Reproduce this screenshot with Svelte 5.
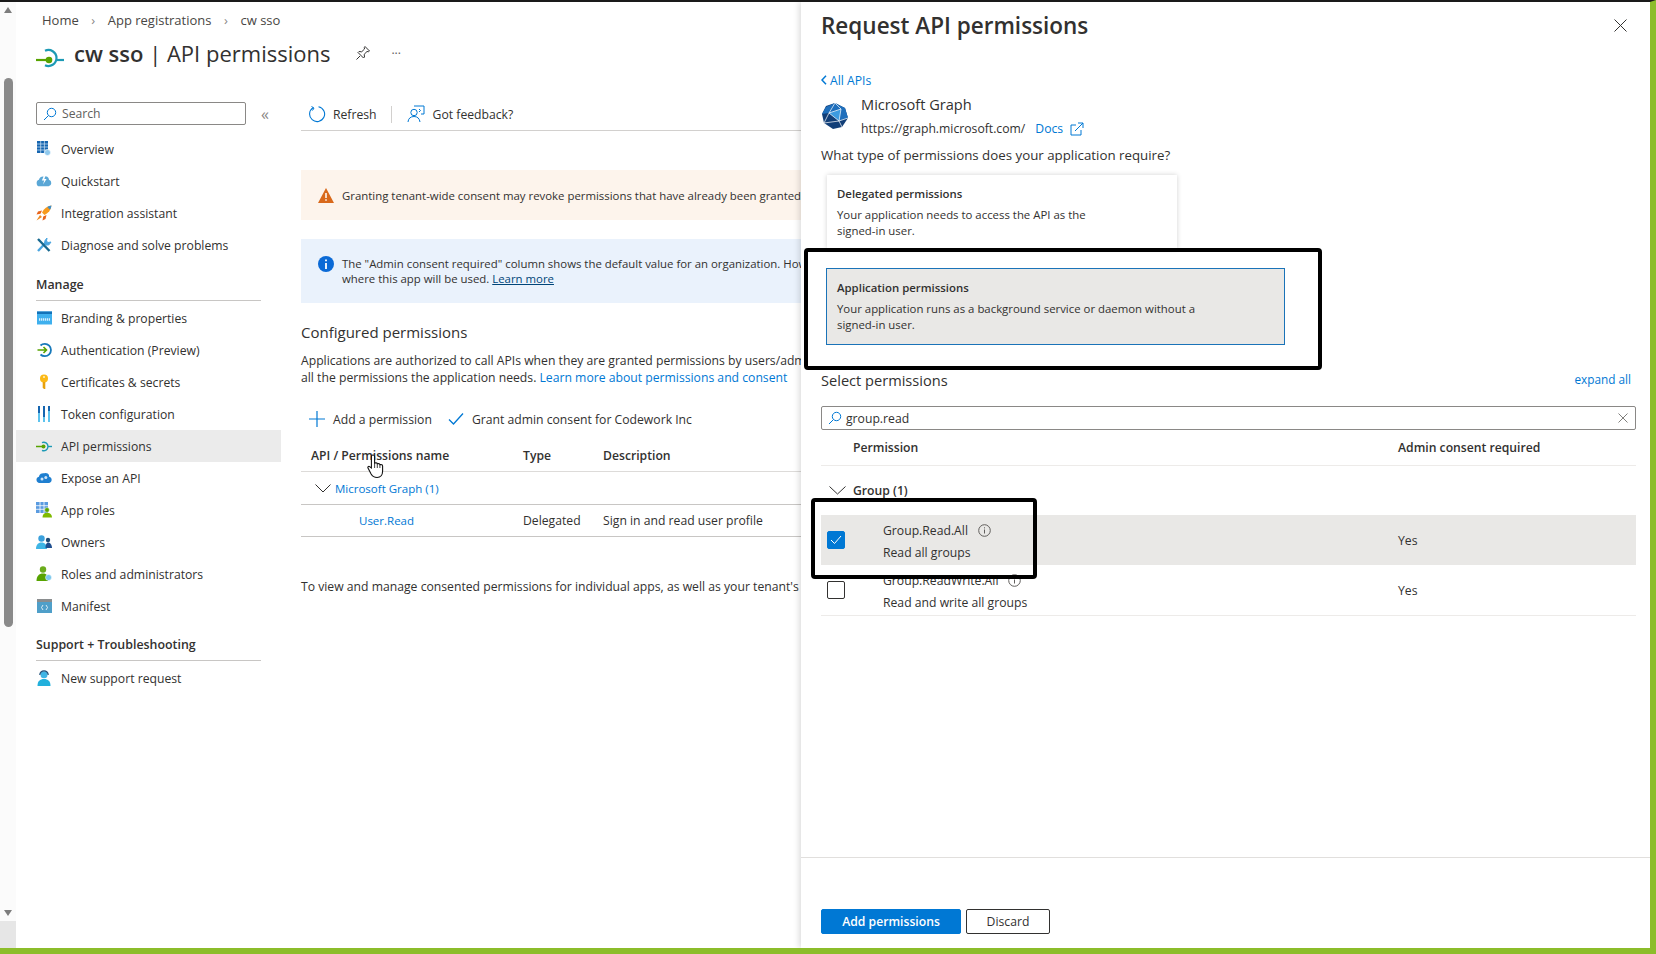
<script>
	const topItems = [
		{ icon: 'overview', label: 'Overview' },
		{ icon: 'quick', label: 'Quickstart' },
		{ icon: 'rocket', label: 'Integration assistant' },
		{ icon: 'tools', label: 'Diagnose and solve problems' }
	];
	const manageItems = [
		{ icon: 'brand', label: 'Branding & properties' },
		{ icon: 'auth', label: 'Authentication (Preview)' },
		{ icon: 'key', label: 'Certificates & secrets' },
		{ icon: 'token', label: 'Token configuration' },
		{ icon: 'api', label: 'API permissions', active: true },
		{ icon: 'expose', label: 'Expose an API' },
		{ icon: 'roles', label: 'App roles' },
		{ icon: 'owners', label: 'Owners' },
		{ icon: 'admins', label: 'Roles and administrators' },
		{ icon: 'manifest', label: 'Manifest' }
	];
	const scopes = [
		{ name: 'Group.Read.All', desc: 'Read all groups', checked: true },
		{ name: 'Group.ReadWrite.All', desc: 'Read and write all groups', checked: false }
	];
</script>

{#snippet navIcon(name)}
	<svg class="nav-icon" width="16" height="16" viewBox="0 0 16 16">
		{#if name === 'overview'}
			<path d="M1 0h11v12H1z" fill="#1565b0" />
			<path d="M4.700 0v12M8.400 0v12M1 3h11M1 6h11M1 9h11" stroke="#d5e8f7" stroke-width=".7" />
			<circle cx="11.500" cy="11.500" r="3" fill="#8fc8ec" stroke="#fff" stroke-width=".6" />
		{:else if name === 'quick'}
			<path d="M3.500 13.500a3 3 0 0 1-.6-5.900A4 4 0 0 1 8 4.700a3.400 3.400 0 0 1 5 2.900 3 3 0 0 1-.4 5.900z" transform="translate(0 -1.500) scale(1 1.100)" fill="#5aa7d6" />
			<path d="M8.500 1.500 5.800 7.500h2.400L7 11.500l3.600-5.500H8.300L10 1.500z" fill="#fff" />
		{:else if name === 'rocket'}
			<path d="M15.500.500c-4.500.5-7.500 3-9.500 7l2.500 2.500c4-2 6.500-5 7-9.500z" fill="#f79a1d" />
			<path d="M15.500.500c-1.700.2-3 .7-4.200 1.500l2.700 2.700c.8-1.200 1.300-2.500 1.500-4.200z" fill="#3d8fcc" />
			<path d="M6 5.500 2 6.500 .5 9.500l4-.7zM10.500 10l-1 4-3 1.500.7-4z" fill="#e8641b" />
			<path d="M4 10 .5 15.500 6 12z" fill="#ef8a1f" />
		{:else if name === 'tools'}
			<path d="M2 14 10 5.500" stroke="#4aa5e0" stroke-width="2.400" />
			<path d="M9 3.500 11 1l-.5 3 1.500 1.500 3-.5-2 2.800-3 .3-1.500-1.500z" fill="#4aa5e0" stroke="#4aa5e0" />
			<path d="M2 2l11.500 12" stroke="#17688f" stroke-width="2.400" />
		{:else if name === 'brand'}
			<path d="M1 1.500h15v13H1z" fill="#3fb0ee" />
			<path d="M1 1.500h15v2.500H1z" fill="#1372b8" />
			<path d="M3 9.500h11" stroke="#d8f0fd" stroke-width="2.400" stroke-dasharray="1.300 .7" />
		{:else if name === 'auth'}
			<path d="M4.500 3.500A6.200 6.200 0 1 1 4.500 12.500" fill="none" stroke="#1779ba" stroke-width="1.800" />
			<path d="M1.500 8h9M7.500 5l3 3-3 3" fill="none" stroke="#57a300" stroke-width="1.600" />
		{:else if name === 'key'}
			<circle cx="8" cy="4.500" r="4" fill="#fcb916" />
			<path d="M6.700 8h2.600v7H8l-1.300-1.300z" fill="#e8a10c" />
			<circle cx="8" cy="3" r="1" fill="#fff3c4" />
		{:else if name === 'token'}
			<path d="M3 0v16M8 0v16M13 0v16" stroke="#5cc3ee" stroke-width="2" />
			<path d="M3 0v7M8 0v11M13 0v5" stroke="#1565b0" stroke-width="2" />
		{:else if name === 'api'}
			<path d="M0 8.500h8" stroke="#57a300" stroke-width="1.500" />
			<circle cx="7.500" cy="8.500" r="2" fill="#57a300" />
			<path d="M6 4.700a4.200 4.200 0 1 1 0 7.600" fill="none" stroke="#1c9ab5" stroke-width="1.400" />
			<path d="M12 8.500h4" stroke="#1c9ab5" stroke-width="1.400" />
		{:else if name === 'expose'}
			<path d="M3.500 13a3.200 3.200 0 0 1-.6-6.300A4.300 4.300 0 0 1 8.200 3.300a3.500 3.500 0 0 1 5 3.400 3.200 3.200 0 0 1-.5 6.300z" fill="#1f7fd0" />
			<circle cx="6" cy="9" r="1.500" fill="#cfe4f7" />
			<circle cx="9.800" cy="7.500" r="1.500" fill="#cfe4f7" />
		{:else if name === 'roles'}
			<path d="M0 0h12v11H0z" fill="#5a9be0" />
			<path d="M4 0v11M8 0v11M0 3.700h12M0 7.300h12" stroke="#fff" stroke-width=".8" />
			<circle cx="11" cy="8" r="2.400" fill="#57a300" stroke="#fff" stroke-width=".5" />
			<path d="M6.500 15.500c0-3 1.500-4.800 4.500-4.800s5 1.800 5 4.800z" fill="#7fba00" />
		{:else if name === 'owners'}
			<circle cx="5.500" cy="4.500" r="3.200" fill="#3aa0dc" />
			<path d="M0 15c0-4 2-6.500 5.500-6.500S11 11 11 15z" fill="#3fb5e5" />
			<circle cx="12" cy="6" r="2.200" fill="#1f4e79" />
			<path d="M9.500 14c0-3 .8-5.500 2.800-5.500S16 11 16 14z" fill="#1f4e8f" />
		{:else if name === 'admins'}
			<circle cx="7" cy="3.500" r="3.200" fill="#6bac1c" />
			<path d="M.5 15c0-5 2.500-7.500 6.500-7.500s5 2 5 7.500z" fill="#57a300" />
			<circle cx="12.500" cy="11.500" r="3" fill="#7cc8ec" stroke="#fff" stroke-width=".5" />
		{:else if name === 'manifest'}
			<path d="M1 1h15v14H1z" fill="#4f9fc9" />
			<path d="M1 1h15v3H1z" fill="#8a8d8f" />
			<path d="M7 7 5.500 9.500 7 12M10 7l1.500 2.500L10 12" fill="none" stroke="#fff" stroke-width=".8" />
		{:else}
			<circle cx="8" cy="4.800" r="3.500" fill="#3fb5e5" />
			<path d="M3.800 5a4.200 4.200 0 0 1 8.400 0" fill="none" stroke="#1f4e79" stroke-width="1.200" />
			<path d="M1.500 16c0-5 2.500-7 6.500-7s6.500 2 6.500 7z" fill="#22b0dc" />
		{/if}
	</svg>
{/snippet}

{#snippet infoDot()}
	<svg class="info-dot" width="13" height="13" viewBox="0 0 13 13">
		<circle cx="6.500" cy="6.500" r="5.800" fill="none" stroke="#605e5c" />
		<path d="M6.500 5.500v4M6.500 3.300v1.100" stroke="#605e5c" />
	</svg>
{/snippet}

<div class="screen">
	<div class="scrollbar">
		<span class="arrow up"></span>
		<div class="thumb"></div>
		<span class="arrow down"></span>
		<div class="scroll-end"></div>
	</div>

	<div class="blade">
		<nav class="crumbs">
			<span>Home</span><i>›</i><span>App registrations</span><i>›</i><span>cw sso</span>
		</nav>
		<header class="title">
			<svg width="28" height="20" viewBox="0 0 28 20">
				<path d="M0 12h13" stroke="#57a300" stroke-width="2.200" />
				<circle cx="13" cy="12" r="3.300" fill="#57a300" />
				<path d="M9 4.800a8 8 0 1 1 0 14.400" fill="none" stroke="#1c9ab5" stroke-width="2.200" transform="translate(0 -2)" />
				<path d="M21 12h7" stroke="#1c9ab5" stroke-width="2.200" />
			</svg>
			<h1><b>cw sso</b> | API permissions</h1>
			<svg class="pin" width="16" height="16" viewBox="0 0 16 16">
				<path d="M10 1.500 14.500 6l-1 .7-1.500-.2-2.800 2.800.3 2.700-1 1-5.500-5.500 1-1 2.700.3L9.500 4 9.300 2.500zM5 11l-3.500 3.500" fill="none" stroke="#323130" />
			</svg>
			<span class="more">···</span>
		</header>

		<div class="columns">
			<aside class="side">
				<div class="side-search">
					<div class="search-box">
						<svg width="14" height="14" viewBox="0 0 14 14">
							<circle cx="8.500" cy="5.500" r="4.200" fill="none" stroke="#0078d4" />
							<path d="M5.500 8.500 1 13" stroke="#0078d4" />
						</svg>
						<span>Search</span>
					</div>
					<span class="collapse">«</span>
				</div>
				<ul>
					{#each topItems as item}
						<li>{@render navIcon(item.icon)}<span>{item.label}</span></li>
					{/each}
				</ul>
				<h3>Manage</h3>
				<ul>
					{#each manageItems as item}
						<li class:active={item.active}>{@render navIcon(item.icon)}<span>{item.label}</span></li>
					{/each}
				</ul>
				<h3 class="support">Support + Troubleshooting</h3>
				<ul>
					<li>{@render navIcon('support')}<span>New support request</span></li>
				</ul>
			</aside>

			<main class="content">
				<div class="toolbar">
					<span class="tool">
						<svg width="18" height="18" viewBox="0 0 18 18">
							<path d="M5 2.800A7.500 7.500 0 1 0 10.500 1.700" fill="none" stroke="#0078d4" stroke-width="1.100" />
							<path d="M3.500 1.500 6 3 4.500 5.500" fill="none" stroke="#0078d4" />
						</svg>
						Refresh
					</span>
					<span class="sep"></span>
					<span class="tool feedback">
						<svg width="18" height="18" viewBox="0 0 18 18">
							<circle cx="7" cy="7.500" r="3.200" fill="none" stroke="#0078d4" />
							<path d="M1 17c.3-3.500 2.500-5.500 6-5.500s5.500 2 6 5.500M7 1h10v8h-3M12 4l1.500 1.500L12 7" fill="none" stroke="#0078d4" />
						</svg>
						Got feedback?
					</span>
				</div>

				<div class="banner warn">
					<svg width="16" height="15" viewBox="0 0 16 15">
						<path d="M8 0 16 15H0z" fill="#d9691b" />
						<path d="M8 5v5M8 11.200v1.600" stroke="#fff" stroke-width="1.500" />
					</svg>
					<p>Granting tenant-wide consent may revoke permissions that have already been granted for this tenant.</p>
				</div>
				<div class="banner info">
					<svg width="16" height="16" viewBox="0 0 16 16">
						<circle cx="8" cy="8" r="8" fill="#0b6ad6" />
						<path d="M8 7v6M8 3.500v1.800" stroke="#fff" stroke-width="1.800" />
					</svg>
					<p>The "Admin consent required" column shows the default value for an organization. However, user consent can be customized per permission,<br />where this app will be used. <a href="#top" class="under">Learn more</a></p>
				</div>

				<h2>Configured permissions</h2>
				<p class="lead">
					Applications are authorized to call APIs when they are granted permissions by users/admins as part of the consent process. The list of configured permissions should include<br />
					all the permissions the application needs. <a href="#top">Learn more about permissions and consent</a>
				</p>

				<div class="actions">
					<span class="tool">
						<svg width="16" height="16" viewBox="0 0 16 16"><path d="M8 0v16M0 8h16" stroke="#0078d4" stroke-width="1.200" /></svg>
						Add a permission
					</span>
					<span class="tool grant">
						<svg width="16" height="14" viewBox="0 0 16 14"><path d="M1 7.500 5.500 12 15 1.500" fill="none" stroke="#0078d4" stroke-width="1.300" /></svg>
						Grant admin consent for Codework Inc
					</span>
				</div>

				<div class="grid-row head">
					<span>API / Permissions name</span><span>Type</span><span>Description</span><span>Admin consent req...</span>
				</div>
				<div class="api-group">
					<svg width="16" height="9" viewBox="0 0 16 9"><path d="M.5.500 8 8 15.500.500" fill="none" stroke="#323130" /></svg>
					<a href="#top">Microsoft Graph (1)</a>
				</div>
				<div class="grid-row perm">
					<a href="#top">User.Read</a><span>Delegated</span><span>Sign in and read user profile</span><span>No</span>
				</div>
				<p class="note">To view and manage consented permissions for individual apps, as well as your tenant's consent settings, try Enterprise applications.</p>
			</main>
		</div>
	</div>

	<section class="panel">
		<div class="panel-head">
			<h1>Request API permissions</h1>
			<svg width="13" height="13" viewBox="0 0 13 13"><path d="M.5.500l12 12M12.500.500l-12 12" stroke="#323130" /></svg>
		</div>
		<a class="back" href="#top">
			<svg width="6" height="10" viewBox="0 0 6 10"><path d="M5 .8 1 5l4 4.200" fill="none" stroke="#0078d4" stroke-width="1.500" /></svg>
			All APIs
		</a>
		<div class="graph">
			<svg width="28" height="28" viewBox="0 0 28 28">
				<path d="M14 1 24 6l3 10-6 9-9 2-9-6-2-9 4-8z" fill="#123f78" />
				<path d="M14 1 24 6l3 10-9 3L8 11 1 12l4-7z" fill="#1f6fbc" />
				<path d="M8 11 20 7l-2 12z" fill="#3d9be0" />
				<path d="M14 1 8 11 20 7 14 1M8 11l10 8 2-12M8 11l-5 10 15-2 3 6M18 19l9-3" fill="none" stroke="#fff" stroke-width=".7" />
			</svg>
			<div>
				<div class="graph-name">Microsoft Graph</div>
				<div class="graph-url">
					https://graph.microsoft.com/
					<a href="#top">Docs</a>
					<svg width="14" height="14" viewBox="0 0 14 14"><path d="M6 3H1v10h10V8M5 9l8-8M8 1h5v5" fill="none" stroke="#0078d4" /></svg>
				</div>
			</div>
		</div>
		<p class="question">What type of permissions does your application require?</p>

		<div class="type-card">
			<h4>Delegated permissions</h4>
			<p>Your application needs to access the API as the<br />signed-in user.</p>
		</div>
		<div class="type-card selected">
			<h4>Application permissions</h4>
			<p>Your application runs as a background service or daemon without a<br />signed-in user.</p>
		</div>

		<div class="select-head">
			<h2>Select permissions</h2>
			<a href="#top">expand all</a>
		</div>
		<div class="filter">
			<svg width="14" height="14" viewBox="0 0 14 14">
				<circle cx="8.500" cy="5.500" r="4.200" fill="none" stroke="#0078d4" />
				<path d="M5.500 8.500 1 13" stroke="#0078d4" />
			</svg>
			<span>group.read</span>
			<svg class="clear" width="10" height="10" viewBox="0 0 10 10"><path d="M.5.500l9 9M9.500.500l-9 9" stroke="#605e5c" stroke-width=".8" /></svg>
		</div>
		<div class="scope-head"><span>Permission</span><span>Admin consent required</span></div>
		<div class="scope-group">
			<svg width="17" height="9" viewBox="0 0 17 9"><path d="M.5.500 8.500 8 16.500.500" fill="none" stroke="#323130" /></svg>
			<span>Group (1)</span>
		</div>
		{#each scopes as scope}
			<div class="scope" class:checked={scope.checked}>
				<span class="box">
					{#if scope.checked}
						<svg width="12" height="10" viewBox="0 0 12 10"><path d="M1 5l3.500 3.500L11 1" fill="none" stroke="#fff" /></svg>
					{/if}
				</span>
				<div class="scope-text">
					<div class="scope-name">{scope.name}{@render infoDot()}</div>
					<div class="scope-desc">{scope.desc}</div>
				</div>
				<span class="yes">Yes</span>
			</div>
		{/each}

		<div class="footer">
			<button class="primary">Add permissions</button>
			<button>Discard</button>
		</div>
	</section>

	<!-- tutorial markup drawn over the capture -->
	<div class="callout one"></div>
	<div class="callout two"></div>
	<svg class="hand" width="20" height="26" viewBox="0 0 20 26">
		<path d="M6 2c1 0 1.600.7 1.600 1.700V10l1.400-.3c.8 0 1.200.4 1.300 1l1.300-.2c.8 0 1.200.4 1.300 1.100l1.200-.1c1 0 1.500.6 1.500 1.500V18c0 3.500-2 6.500-5.500 6.500-3 0-4.500-1-6-3.500L1 15c-.5-1 .6-2 1.600-1.400L4.400 15V3.700C4.400 2.700 5 2 6 2z" fill="#fff" stroke="#111" stroke-width="1.100" />
		<path d="M7.600 10v5M10.300 10.500V15M12.900 11.500V15" stroke="#111" stroke-width=".8" />
	</svg>
</div>

<style>
	:global(body) {
		margin: 0;
	}

	.screen {
		position: relative;
		width: 1656px;
		height: 954px;
		box-sizing: border-box;
		display: flex;
		overflow: hidden;
		background: #fff;
		border-top: 2px solid #1a1a1a;
		border-right: 6px solid #8cbd2a;
		border-bottom: 6px solid #8cbd2a;
		font-family: 'Open Sans', 'Noto Sans', sans-serif;
		font-size: 12.2px;
		color: #323130;
	}

	a {
		color: #0078d4;
		text-decoration: none;
	}

	h1,
	h2,
	h3,
	h4,
	p,
	ul {
		margin: 0;
		padding: 0;
		font-weight: 400;
	}

	ul {
		list-style: none;
	}

	/* page scrollbar */
	.scrollbar {
		flex: none;
		width: 16px;
		display: flex;
		flex-direction: column;
		align-items: center;
		background: #fbfbfb;
	}

	.arrow {
		width: 0;
		height: 0;
		border-left: 4px solid transparent;
		border-right: 4px solid transparent;
	}

	.arrow.up {
		margin-top: 5px;
		border-bottom: 6px solid #7d7d7d;
	}

	.arrow.down {
		margin-top: auto;
		margin-bottom: 5px;
		border-top: 6px solid #7d7d7d;
	}

	.thumb {
		width: 9px;
		height: 549px;
		margin-top: 65px;
		border-radius: 5px;
		background: #8a8a8a;
	}

	.scroll-end {
		align-self: stretch;
		height: 27px;
		background: #e6e6e6;
	}

	/* blade behind the panel */
	.blade {
		flex: none;
		width: 785px;
		overflow: hidden;
	}

	.crumbs {
		display: flex;
		align-items: center;
		height: 20px;
		margin: 8px 0 0 26px;
		font-size: 13px;
		color: #484644;
	}

	.crumbs i {
		width: 29px;
		text-align: center;
		font-style: normal;
		color: #8a8886;
	}

	.title {
		display: flex;
		align-items: center;
		height: 36px;
		margin: 5px 0 0 20px;
	}

	.title svg:first-child {
		margin-top: 10px;
	}

	.title h1 {
		margin-left: 10px;
		font-size: 22px;
		white-space: nowrap;
	}

	.title b {
		font-weight: 600;
	}

	.pin {
		margin-left: 25px;
	}

	.more {
		margin-left: 20px;
		color: #605e5c;
	}

	.columns {
		display: flex;
		margin-top: 31px;
	}

	.side {
		flex: none;
		width: 265px;
	}

	.side-search {
		display: flex;
		align-items: center;
		height: 23px;
		padding-left: 20px;
	}

	.search-box {
		flex: none;
		display: flex;
		align-items: center;
		gap: 5px;
		box-sizing: border-box;
		width: 210px;
		height: 23px;
		padding-left: 6px;
		border: 1px solid #8a8886;
		border-radius: 2px;
		color: #605e5c;
	}

	.collapse {
		margin-left: 15px;
		font-size: 16px;
		color: #8a8886;
	}

	.side ul {
		margin-top: 8px;
	}

	.side h3 + ul {
		margin-top: 1px;
	}

	.side li {
		display: flex;
		align-items: center;
		gap: 9px;
		height: 32px;
		padding-left: 20px;
		white-space: nowrap;
	}

	.side li.active {
		background: #ebebeb;
	}

	.nav-icon {
		flex: none;
	}

	.side h3 {
		height: 20px;
		margin: 15px 20px 0;
		padding-bottom: 4px;
		border-bottom: 1px solid #c8c6c4;
		font-size: 12.4px;
		font-weight: 600;
	}

	.side h3.support {
		margin-top: 14px;
	}

	.content {
		flex: 1;
		min-width: 0;
		margin-left: 20px;
		white-space: nowrap;
	}

	.toolbar {
		display: flex;
		align-items: center;
		height: 32px;
		margin-top: -4px;
		padding-left: 7px;
		border-bottom: 1px solid #d2d0ce;
	}

	.tool {
		display: inline-flex;
		align-items: center;
		gap: 7px;
	}

	.tool.feedback {
		gap: 8px;
	}

	.sep {
		width: 1px;
		height: 17px;
		margin: 0 15px 0 14px;
		background: #d2d0ce;
	}

	.banner {
		display: flex;
		gap: 8px;
		padding-left: 17px;
		font-size: 11.400px;
		line-height: 15px;
	}

	.banner svg {
		flex: none;
	}

	.banner.warn {
		align-items: center;
		height: 50px;
		margin-top: 39px;
		background: #fdf4ec;
	}

	.banner.info {
		align-items: center;
		height: 64px;
		margin-top: 19px;
		background: #eaf2fc;
	}

	.banner.info svg {
		margin-top: -14px;
	}

	.under {
		color: #004578;
		text-decoration: underline;
	}

	.content h2 {
		margin-top: 16px;
		font-size: 15px;
		line-height: 27px;
	}

	.lead {
		margin-top: 6px;
		line-height: 17px;
	}

	.actions {
		display: flex;
		align-items: center;
		height: 30px;
		margin-top: 18px;
		padding-left: 8px;
	}

	.actions .tool {
		gap: 8px;
	}

	.grant {
		margin-left: 16px;
	}

	.grid-row {
		display: grid;
		grid-template-columns: 212px 80px 300px 200px;
		align-items: center;
	}

	.grid-row.head {
		height: 32px;
		margin-top: 5px;
		padding-left: 10px;
		border-bottom: 1px solid #dddbd9;
		font-weight: 600;
	}

	.api-group {
		display: flex;
		align-items: center;
		gap: 4px;
		height: 32px;
		padding-left: 14px;
		border-bottom: 1px solid #c8c6c4;
	}

	.api-group a,
	.perm a {
		font-size: 11.500px;
	}

	.grid-row.perm {
		height: 31px;
		padding-left: 58px;
		grid-template-columns: 164px 80px 300px 200px;
		border-bottom: 1px solid #c8c6c4;
	}

	.note {
		margin-top: 41px;
	}

	/* right-hand panel */
	.panel {
		position: relative;
		z-index: 1;
		flex: 1;
		min-width: 0;
		display: flex;
		flex-direction: column;
		box-sizing: border-box;
		padding: 0 14px 0 20px;
		background: #fff;
		box-shadow: -2px 0 6px rgba(0, 0, 0, 0.14);
	}

	.panel-head {
		display: flex;
		align-items: center;
		justify-content: space-between;
		height: 36px;
		margin-top: 5px;
		padding-right: 9px;
	}

	.panel-head h1 {
		font-size: 22.500px;
		font-weight: 600;
	}

	.back {
		display: flex;
		align-items: center;
		gap: 3px;
		height: 18px;
		margin-top: 28px;
	}

	.graph {
		display: flex;
		align-items: center;
		gap: 12px;
		margin-top: 3px;
	}

	.graph-name {
		font-size: 14.600px;
		line-height: 24px;
	}

	.graph-url {
		display: flex;
		align-items: center;
		margin-top: 3px;
		line-height: 20px;
	}

	.graph-url a {
		margin: 0 7px 0 10px;
	}

	.question {
		margin-top: 6px;
		font-size: 13.300px;
		line-height: 20px;
	}

	.type-card {
		box-sizing: border-box;
		width: 350px;
		height: 74px;
		margin: 10px 0 0 6px;
		padding: 11px 10px 0;
		box-shadow: 0 0 5px rgba(0, 0, 0, 0.18);
		font-size: 11.400px;
		line-height: 16px;
	}

	.type-card h4 {
		font-size: 11.400px;
		font-weight: 600;
		margin-bottom: 5px;
	}

	.type-card.selected {
		width: 459px;
		height: 77px;
		margin: 19px 0 0 5px;
		border: 1px solid #1a73b8;
		background: #e9e8e6;
		box-shadow: none;
	}

	.select-head {
		display: flex;
		align-items: center;
		justify-content: space-between;
		height: 24px;
		margin-top: 23px;
		padding-right: 5px;
	}

	.select-head h2 {
		font-size: 14.600px;
	}

	.select-head a {
		margin-top: -2px;
		font-size: 11.800px;
	}

	.filter {
		display: flex;
		align-items: center;
		gap: 4px;
		box-sizing: border-box;
		height: 24px;
		margin-top: 14px;
		padding: 0 6px;
		border: 1px solid #8a8886;
		border-radius: 2px;
	}

	.clear {
		margin-left: auto;
		margin-right: 1px;
	}

	.scope-head {
		display: grid;
		grid-template-columns: 545px 1fr;
		align-items: center;
		height: 35px;
		padding-left: 32px;
		border-bottom: 1px solid #edebe9;
		font-weight: 600;
	}

	.scope-group {
		display: flex;
		align-items: center;
		gap: 7px;
		height: 49px;
		padding: 0 0 0 8px;
		font-weight: 600;
	}

	.scope {
		display: flex;
		align-items: center;
		height: 50px;
		padding-left: 6px;
	}

	.scope.checked {
		background: #e9e8e6;
	}

	.scope:not(.checked) {
		border-bottom: 1px solid #edebe9;
	}

	.box {
		flex: none;
		display: flex;
		align-items: center;
		justify-content: center;
		box-sizing: border-box;
		width: 18px;
		height: 18px;
		border: 1px solid #323130;
		border-radius: 2px;
	}

	.checked .box {
		border-color: #0078d4;
		background: #0078d4;
	}

	.scope-text {
		flex: none;
		width: 515px;
		margin-left: 38px;
		padding-top: 3px;
	}

	.scope-name {
		display: flex;
		align-items: center;
		gap: 10px;
		line-height: 20px;
	}

	.scope-desc {
		margin-top: 2px;
		line-height: 20px;
	}

	.footer {
		display: flex;
		gap: 5px;
		margin: auto -14px 0 -20px;
		padding: 51px 0 14px 20px;
		border-top: 1px solid #e1dfdd;
	}

	button {
		box-sizing: border-box;
		width: 84px;
		height: 25px;
		padding: 0;
		border: 1px solid #323130;
		border-radius: 2px;
		background: #fff;
		font: inherit;
		color: #323130;
	}

	button.primary {
		width: 140px;
		border-color: #0078d4;
		background: #0078d4;
		color: #fff;
		font-weight: 600;
	}

	/* black boxes added on top of the capture */
	.callout {
		position: absolute;
		z-index: 2;
		box-sizing: border-box;
		border: 4px solid #000;
		border-radius: 4px;
		pointer-events: none;
	}

	.callout.one {
		left: 804px;
		top: 246px;
		width: 518px;
		height: 122px;
	}

	.callout.two {
		left: 811px;
		top: 496px;
		width: 226px;
		height: 81px;
	}

	.hand {
		position: absolute;
		z-index: 2;
		left: 367px;
		top: 451px;
	}
</style>
